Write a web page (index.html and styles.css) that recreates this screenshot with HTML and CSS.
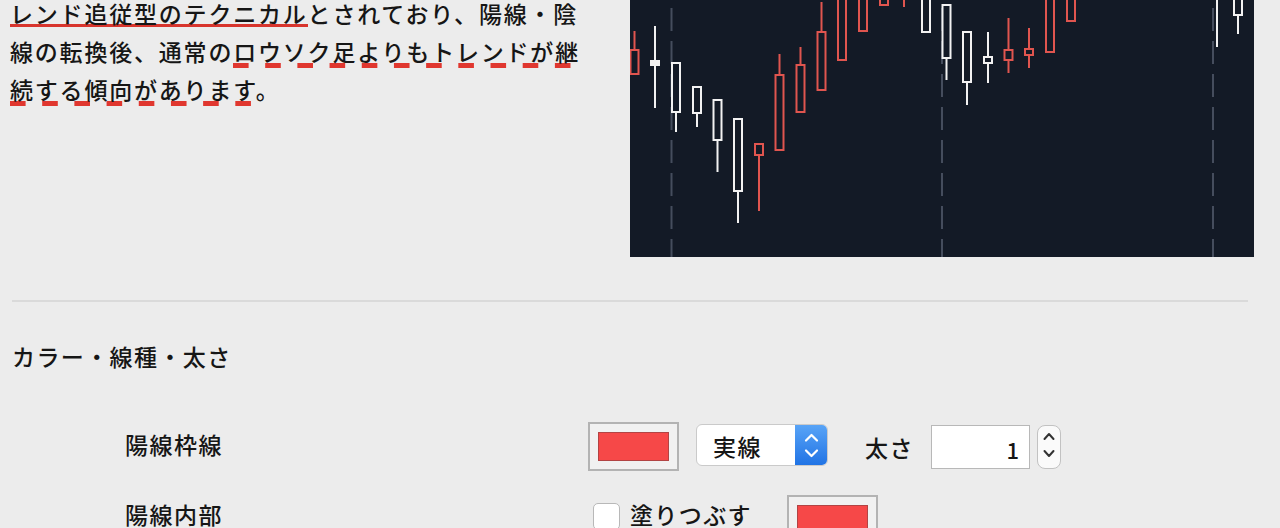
FILE: index.html
```html
<!DOCTYPE html>
<html lang="ja">
<head>
<meta charset="utf-8">
<title>カラー・線種・太さ</title>
<link rel="stylesheet" href="styles.css">
</head>
<body>
<div class="top">
  <p class="desc"><span class="u-solid">レンド追従型のテクニカル</span>とされており、陽線・陰<br>線の転換後、通常の<span class="u-dash">ロウソク足よりもトレンドが継<br>続する傾向があります</span>。</p>
  <div class="chart">
    <svg class="chart-svg" width="624" height="257" viewBox="0 0 624 257">
      <rect x="0" y="0" width="624" height="257" fill="#131a26"/>
      <g stroke="#454d5d" stroke-width="2" stroke-dasharray="23 10">
        <line x1="41.5" y1="8" x2="41.5" y2="257"/>
        <line x1="312" y1="8" x2="312" y2="257"/>
        <line x1="583" y1="8" x2="583" y2="257"/>
      </g>
      <g stroke="#f2f2f2" stroke-width="2" fill="#131a26">
        <line x1="25" y1="26" x2="25" y2="108"/>
        <rect x="20" y="60" width="10" height="6" fill="#f2f2f2" stroke="none"/>
        <line x1="46" y1="62" x2="46" y2="132"/>
        <rect x="42" y="63" width="8" height="49"/>
        <line x1="67" y1="86" x2="67" y2="127"/>
        <rect x="63" y="87" width="8" height="26"/>
        <line x1="87.5" y1="99" x2="87.5" y2="172"/>
        <rect x="83.5" y="100" width="8" height="40"/>
        <line x1="108" y1="118" x2="108" y2="223"/>
        <rect x="104" y="119" width="8" height="72"/>
        <rect x="292" y="-5" width="8" height="37"/>
        <line x1="316.5" y1="4" x2="316.5" y2="80"/>
        <rect x="312.5" y="5" width="8" height="53"/>
        <line x1="337" y1="31" x2="337" y2="105"/>
        <rect x="333" y="32" width="8" height="50"/>
        <line x1="358" y1="32" x2="358" y2="83"/>
        <rect x="354" y="57" width="8" height="6"/>
        <line x1="587" y1="0" x2="587" y2="47"/>
        <line x1="608" y1="0" x2="608" y2="34"/>
        <rect x="604" y="-5" width="8" height="20"/>
      </g>
      <g stroke="#e0554f" stroke-width="2" fill="#131a26">
        <line x1="4.5" y1="31" x2="4.5" y2="75"/>
        <rect x="0.5" y="50" width="8" height="24"/>
        <line x1="129" y1="143" x2="129" y2="211"/>
        <rect x="125" y="144" width="8" height="11"/>
        <line x1="149.5" y1="54" x2="149.5" y2="151"/>
        <rect x="145.5" y="75" width="8" height="75"/>
        <line x1="170.5" y1="47" x2="170.5" y2="113"/>
        <rect x="166.5" y="65" width="8" height="47"/>
        <line x1="191.5" y1="2" x2="191.5" y2="91"/>
        <rect x="187.5" y="32" width="8" height="58"/>
        <rect x="208" y="-5" width="8" height="65"/>
        <rect x="229" y="-5" width="8" height="36"/>
        <rect x="250" y="-5" width="8" height="10"/>
        <line x1="274" y1="0" x2="274" y2="7"/>
        <line x1="378.5" y1="18" x2="378.5" y2="73"/>
        <rect x="374.5" y="50" width="8" height="10"/>
        <line x1="399" y1="28" x2="399" y2="68"/>
        <rect x="395" y="49" width="8" height="6"/>
        <rect x="416" y="-5" width="8" height="57"/>
        <rect x="437" y="-5" width="8" height="26"/>
      </g>
    </svg>
  </div>
</div>

<div class="rule"></div>

<h2 class="section-title">カラー・線種・太さ</h2>

<div class="row row-first">
  <div class="row-label">陽線枠線</div>
  <div class="swatch"><div class="swatch-color"></div></div>
  <div class="select">
    <span class="select-text">実線</span>
    <span class="select-arrows">
      <svg width="33" height="42" viewBox="0 0 33 42">
        <polyline points="11,16.5 16.5,11 22,16.5" fill="none" stroke="#fff" stroke-width="2.2" stroke-linecap="round" stroke-linejoin="round"/>
        <polyline points="11,26.5 16.5,32 22,26.5" fill="none" stroke="#fff" stroke-width="2.2" stroke-linecap="round" stroke-linejoin="round"/>
      </svg>
    </span>
  </div>
  <div class="width-label">太さ</div>
  <div class="num-input">1</div>
  <div class="stepper">
    <svg width="24" height="44" viewBox="0 0 24 44">
      <polyline points="7.5,14 12,9 16.5,14" fill="none" stroke="#333" stroke-width="2" stroke-linecap="round" stroke-linejoin="round"/>
      <polyline points="7.5,26 12,31 16.5,26" fill="none" stroke="#333" stroke-width="2" stroke-linecap="round" stroke-linejoin="round"/>
    </svg>
  </div>
</div>

<div class="row row-second">
  <div class="row-label">陽線内部</div>
  <div class="checkbox"></div>
  <div class="fill-label">塗りつぶす</div>
  <div class="swatch"><div class="swatch-color"></div></div>
</div>
</body>
</html>
```

FILE: styles.css
```css
html, body {
  margin: 0;
  padding: 0;
}

body {
  width: 1280px;
  height: 528px;
  overflow: hidden;
  background: #ececec;
  color: #161616;
  font-family: "Noto Sans CJK JP", "Noto Sans CJK SC", sans-serif;
  font-size: 23px;
  font-weight: 500;
  letter-spacing: 1.8px;
}

.top {
  display: flex;
  height: 257px;
}

.desc {
  flex: 0 0 630px;
  box-sizing: border-box;
  margin: -6px 0 0 0;
  padding-left: 10px;
  line-height: 38px;
  white-space: nowrap;
}

.u-solid {
  background-image: linear-gradient(#d8352d, #d8352d);
  background-repeat: no-repeat;
  background-size: 100% 3px;
  background-position: 0 calc(100% - 3px);
}

.u-dash {
  -webkit-box-decoration-break: clone;
  box-decoration-break: clone;
  background-image: linear-gradient(to right, #e0372f 0, #e0372f 16px, rgba(224, 55, 47, 0) 16px);
  background-repeat: repeat-x;
  background-size: 32.2px 5px;
  background-position: 0 calc(100% - 0px);
}

.chart {
  flex: 0 0 624px;
  height: 257px;
}

.chart-svg {
  display: block;
}

.rule {
  height: 2px;
  background: #dadada;
  margin: 43px 32px 0 12px;
}

.section-title {
  margin: 36px 0 0 12px;
  font-size: 23px;
  font-weight: 500;
  line-height: 37px;
  letter-spacing: 1.4px;
}

.row {
  display: flex;
  align-items: flex-start;
  height: 49px;
}

.row-first {
  margin-top: 47px;
}

.row-second {
  margin-top: 24px;
}

.row-label {
  flex: 0 0 588px;
  box-sizing: border-box;
  padding-left: 125px;
  line-height: 37px;
  letter-spacing: 1.5px;
}

.row-first .row-label {
  margin-top: 4px;
}

.row-second .row-label {
  margin-top: 1px;
}

.swatch {
  box-sizing: border-box;
  width: 91px;
  height: 49px;
  border: 2px solid #b3b3b3;
  background: #f1f1f1;
  padding: 8px;
}

.swatch-color {
  width: 100%;
  height: 100%;
  box-sizing: border-box;
  background: #f64848;
  border: 1px solid #b24444;
}

.select {
  box-sizing: border-box;
  display: flex;
  width: 132px;
  height: 42px;
  margin: 2px 0 0 17px;
  border: 1px solid #cacaca;
  border-radius: 6px;
  background: #fff;
  overflow: hidden;
}

.select-text {
  flex: 1;
  padding: 3px 0 0 16px;
  line-height: 37px;
  letter-spacing: 1.5px;
}

.select-arrows {
  width: 33px;
  margin: -1px -1px -1px 0;
  background: linear-gradient(#5aa5f7, #1f72e4);
}

.select-arrows svg {
  display: block;
}

.width-label {
  flex: 0 0 66px;
  margin: 7px 0 0 37px;
  line-height: 37px;
  letter-spacing: 1.5px;
}

.num-input {
  box-sizing: border-box;
  width: 99px;
  height: 44px;
  margin-top: 3px;
  border: 1.5px solid #b8b8b8;
  background: #fff;
  text-align: right;
  padding: 5px 10px 0 0;
  line-height: 36px;
  letter-spacing: 0;
  font-size: 22px;
}

.stepper {
  box-sizing: border-box;
  width: 24px;
  height: 44px;
  margin: 3px 0 0 7px;
  border: 1px solid #c2c2c2;
  border-radius: 8px;
  background: #fafafa;
}

.stepper svg {
  display: block;
  margin: -1px;
}

.checkbox {
  box-sizing: border-box;
  width: 27px;
  height: 27px;
  margin: 8px 0 0 5px;
  border: 1px solid #b8b8b8;
  border-radius: 5px;
  background: #fff;
}

.fill-label {
  flex: 0 0 157px;
  margin: 1px 0 0 10px;
  line-height: 37px;
  letter-spacing: 1.3px;
}
```
